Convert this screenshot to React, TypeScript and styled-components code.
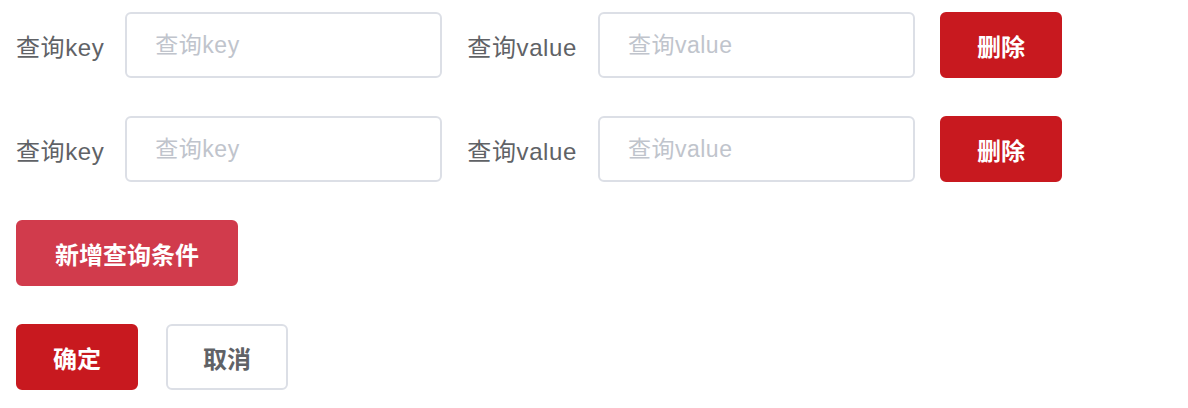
import React from 'react';
import styled, { createGlobalStyle } from 'styled-components';

const GlobalStyle = createGlobalStyle`
  html, body {
    margin: 0;
    padding: 0;
    background: #ffffff;
    font-family: "Liberation Sans", "Noto Sans CJK SC", sans-serif;
  }
`;

const Page = styled.div`
  display: flex;
  flex-direction: column;
  gap: 38px;
  padding: 12px 16px;
`;

const Row = styled.div`
  display: flex;
  align-items: center;
`;

const FormItem = styled.div`
  display: flex;
  align-items: center;
  margin-right: 25px;
`;

const Label = styled.label`
  font-size: 24px;
  letter-spacing: 0.6px;
  color: #606266;
  margin-right: 21px;
  white-space: nowrap;
`;

const Input = styled.input`
  box-sizing: border-box;
  width: 317px;
  height: 66px;
  padding: 0 28px;
  border: 2px solid #dcdfe6;
  border-radius: 6px;
  font-family: inherit;
  font-size: 23px;
  letter-spacing: 0.5px;
  color: #606266;
  outline: none;

  &::placeholder {
    color: #c0c4cc;
  }
`;

const Button = styled.button<{ $variant: 'danger' | 'soft' | 'plain' }>`
  box-sizing: border-box;
  height: 66px;
  padding: 0 ${p => (p.$variant === 'soft' ? 37 : 35)}px;
  border-radius: 6px;
  border: 2px solid
    ${p =>
      p.$variant === 'danger' ? '#c8191f' : p.$variant === 'soft' ? '#d13b4c' : '#dcdfe6'};
  background: ${p =>
    p.$variant === 'danger' ? '#c8191f' : p.$variant === 'soft' ? '#d13b4c' : '#ffffff'};
  color: ${p => (p.$variant === 'plain' ? '#606266' : '#ffffff')};
  font-family: inherit;
  font-size: 24px;
  font-weight: 700;
  cursor: pointer;
  white-space: nowrap;
`;

const Actions = styled.div`
  display: flex;
  gap: 28px;
`;

const queries = [0, 1];

export default function App() {
  return (
    <>
      <GlobalStyle />
      <Page>
        {queries.map(i => (
          <Row key={i}>
            <FormItem>
              <Label>查询key</Label>
              <Input placeholder="查询key" />
            </FormItem>
            <FormItem>
              <Label>查询value</Label>
              <Input placeholder="查询value" />
            </FormItem>
            <Button $variant="danger">删除</Button>
          </Row>
        ))}
        <Row>
          <Button $variant="soft">新增查询条件</Button>
        </Row>
        <Actions>
          <Button $variant="danger">确定</Button>
          <Button $variant="plain">取消</Button>
        </Actions>
      </Page>
    </>
  );
}
